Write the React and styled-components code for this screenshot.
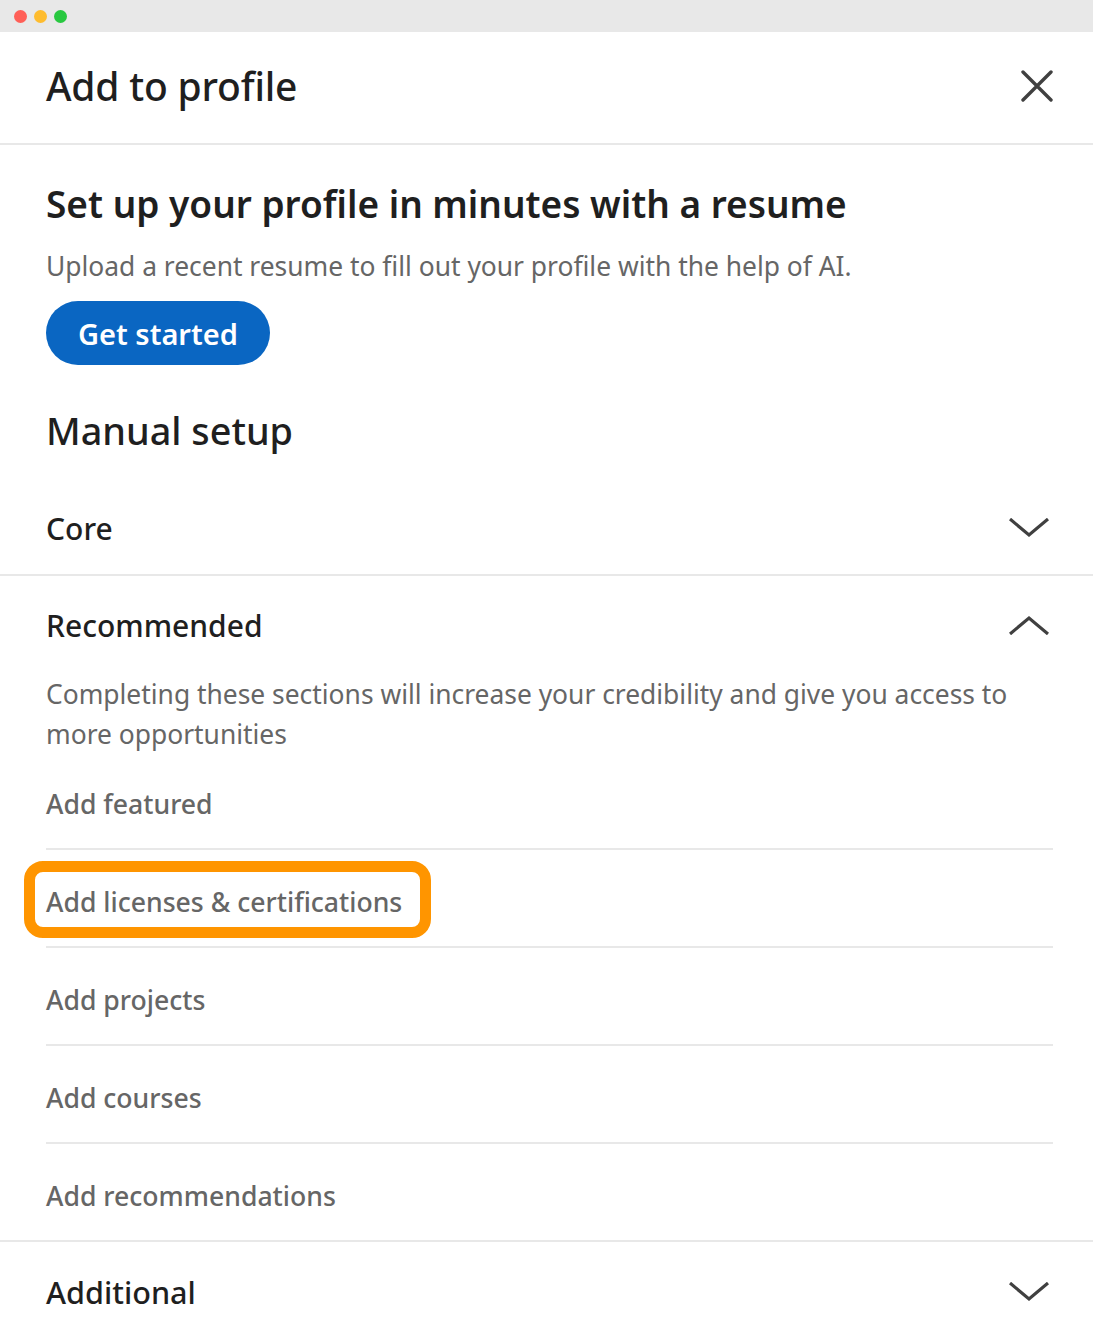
import React from "react";
import styled, { createGlobalStyle } from "styled-components";

const GlobalStyle = createGlobalStyle`
  html, body {
    margin: 0;
    padding: 0;
    background: #ffffff;
  }
  body {
    font-family: "Noto Sans", "Open Sans", sans-serif;
    color: #1f1f1f;
  }
`;

const Window = styled.div`
  width: 1093px;
  height: 1336px;
  background: #ffffff;
  overflow: hidden;
`;

const TitleBar = styled.div`
  height: 32px;
  background: #e8e8e8;
  display: flex;
  align-items: center;
  gap: 7px;
  padding-left: 14px;
  box-sizing: border-box;
`;

const Dot = styled.span`
  width: 13px;
  height: 13px;
  border-radius: 50%;
  background: ${p => p.color};
`;

const Header = styled.div`
  height: 113px;
  box-sizing: border-box;
  display: flex;
  align-items: center;
  justify-content: space-between;
  padding: 0 40px 4px 46px;
  border-bottom: 2px solid #e8e8e8;
`;

const HeaderTitle = styled.h1`
  margin: 0;
  font-size: 39px;
  font-weight: 500;
  color: #1f1f1f;
  letter-spacing: -0.2px;
`;

const IconButton = styled.button`
  border: none;
  background: none;
  padding: 0;
  display: flex;
  align-items: center;
  justify-content: center;
  color: #404040;
`;

const Body = styled.div`
  padding: 35px 46px 0 46px;
`;

const ResumeTitle = styled.h2`
  margin: 0;
  font-size: 37px;
  font-weight: 600;
  line-height: 48px;
  color: #1f1f1f;
`;

const Subtitle = styled.p`
  margin: 20px 0 0 0;
  font-size: 26.4px;
  line-height: 36px;
  color: #666666;
`;

const PrimaryButton = styled.button`
  margin-top: 17px;
  height: 64px;
  padding: 0 32px;
  border: none;
  border-radius: 32px;
  background: #0a66c2;
  color: #ffffff;
  font-family: inherit;
  font-size: 29px;
  font-weight: 600;
`;

const ManualTitle = styled.h2`
  margin: 42px 0 0 0;
  font-size: 37.8px;
  font-weight: 500;
  line-height: 48px;
  color: #1f1f1f;
`;

const Section = styled.div`
  border-bottom: ${p => (p.last ? "none" : "2px solid #e8e8e8")};
`;

const SectionHead = styled.div`
  box-sizing: border-box;
  display: flex;
  align-items: center;
  justify-content: space-between;
  padding: ${p => p.top || 0}px 44px 0 46px;
  height: ${p => p.h}px;
`;

const SectionTitle = styled.h3`
  margin: 0;
  font-size: ${p => p.size || 30}px;
  font-weight: 500;
  color: #1f1f1f;
`;

const SectionText = styled.p`
  margin: 0;
  padding: 0 46px;
  font-size: 26.4px;
  line-height: 40px;
  color: #666666;
`;

const ItemList = styled.ul`
  list-style: none;
  margin: -2px 0 0 0;
  padding: 0 40px 0 46px;
`;

const Item = styled.li`
  position: relative;
  box-sizing: border-box;
  height: ${p => (p.last ? 96 : 98)}px;
  padding-top: 8px;
  display: flex;
  align-items: center;
  border-bottom: ${p => (p.last ? "none" : "2px solid #e8e8e8")};
  font-size: 26.6px;
  font-weight: 500;
  color: #666666;
`;

const Highlight = styled.span`
  position: absolute;
  left: -22px;
  top: 11px;
  width: 407px;
  height: 77px;
  box-sizing: border-box;
  border: 11px solid #ff9500;
  border-radius: 19px;
  pointer-events: none;
`;

const Chevron = ({ up }) => (
  <svg width="40" height="20" viewBox="0 0 40 20" fill="none">
    <path
      d={up ? "M1 19 L20 3 L39 19" : "M1 1 L20 17 L39 1"}
      stroke="#404040"
      strokeWidth="3.2"
    />
  </svg>
);

const CloseIcon = () => (
  <svg width="32" height="32" viewBox="0 0 32 32" fill="none">
    <path d="M2 2 L30 30 M30 2 L2 30" stroke="#404040" strokeWidth="3.4" strokeLinecap="round" />
  </svg>
);

const items = [
  "Add featured",
  "Add licenses & certifications",
  "Add projects",
  "Add courses",
  "Add recommendations"
];

export default function App() {
  return (
    <Window>
      <GlobalStyle />
      <TitleBar>
        <Dot color="#ff5f57" />
        <Dot color="#febc2e" />
        <Dot color="#28c840" />
      </TitleBar>
      <Header>
        <HeaderTitle>Add to profile</HeaderTitle>
        <IconButton>
          <CloseIcon />
        </IconButton>
      </Header>
      <Body>
        <ResumeTitle>Set up your profile in minutes with a resume</ResumeTitle>
        <Subtitle>Upload a recent resume to fill out your profile with the help of AI.</Subtitle>
        <PrimaryButton>Get started</PrimaryButton>
        <ManualTitle>Manual setup</ManualTitle>
      </Body>
      <Section>
        <SectionHead h={119} top={27}>
          <SectionTitle>Core</SectionTitle>
          <Chevron />
        </SectionHead>
      </Section>
      <Section>
        <SectionHead h={98}>
          <SectionTitle>Recommended</SectionTitle>
          <Chevron up />
        </SectionHead>
        <SectionText>
          Completing these sections will increase your credibility and give you access to more
          opportunities
        </SectionText>
        <ItemList>
          {items.map((label, i) => (
            <Item key={label} last={i === items.length - 1}>
              {label}
              {i === 1 && <Highlight />}
            </Item>
          ))}
        </ItemList>
      </Section>
      <Section last>
        <SectionHead h={100}>
          <SectionTitle size={30.6}>Additional</SectionTitle>
          <Chevron />
        </SectionHead>
      </Section>
    </Window>
  );
}
